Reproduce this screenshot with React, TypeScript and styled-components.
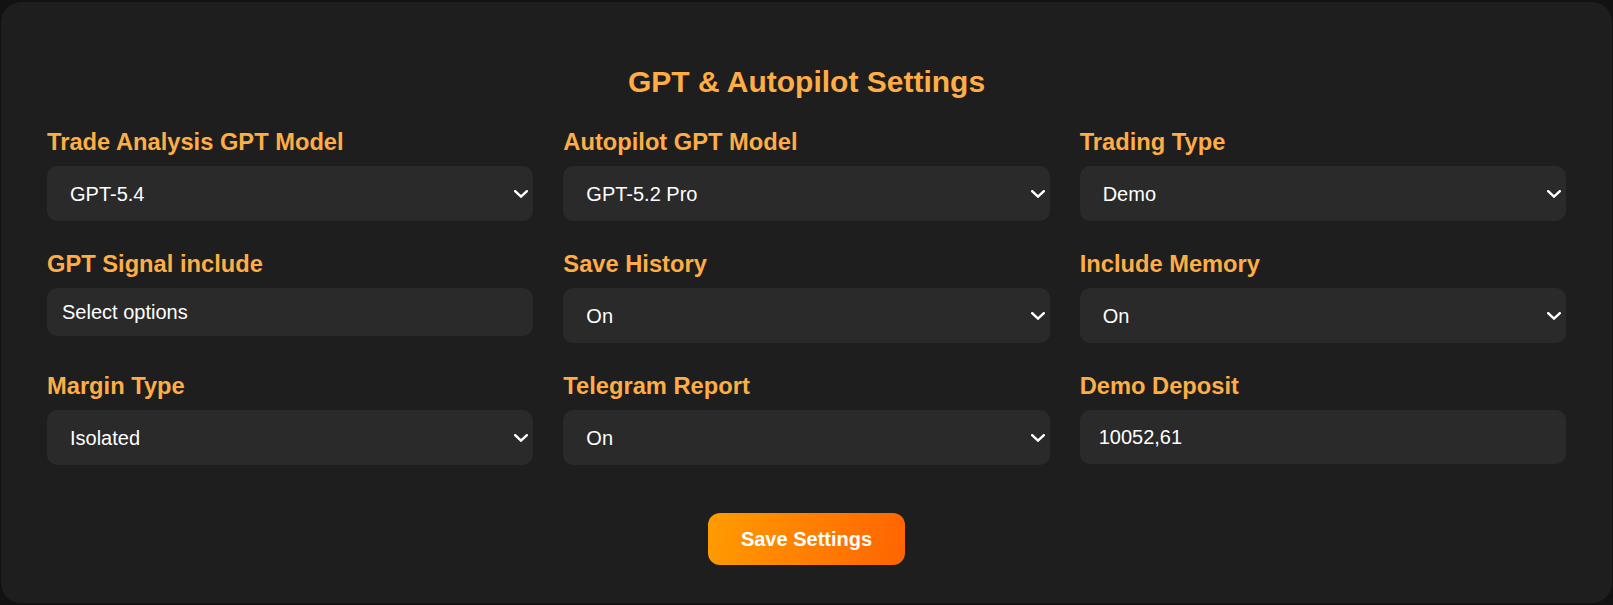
import React, { useState } from "react";
import styled, { createGlobalStyle } from "styled-components";

const GlobalStyle = createGlobalStyle`
  * {
    box-sizing: border-box;
  }

  body {
    margin: 0;
    padding: 2px 1px 2px 1px;
    background: #121212;
    font-family: "Liberation Sans", Arial, sans-serif;
  }
`;

const Card = styled.section`
  background: #1e1e1e;
  border-radius: 20px;
  padding: 62px 46px 38px;
  display: flex;
  flex-direction: column;
  align-items: center;
`;

const Titulo = styled.h2`
  margin: 0 0 30px;
  font-size: 30px;
  line-height: 35px;
  font-weight: 700;
  color: #ffad45;
`;

const Grade = styled.div`
  width: 100%;
  display: grid;
  grid-template-columns: repeat(3, 1fr);
  column-gap: 30px;
  row-gap: 30px;
  align-items: start;
`;

const Campo = styled.div`
  display: flex;
  flex-direction: column;
`;

const Rotulo = styled.label`
  font-size: 23.7px;
  line-height: 27px;
  font-weight: 700;
  color: #ffad45;
  margin-bottom: 10px;
`;

const CaixaSelect = styled.div`
  position: relative;
`;

const Select = styled.select`
  appearance: none;
  width: 100%;
  height: 55px;
  padding: 0 40px 0 23px;
  border: none;
  border-radius: 10px;
  background: #2a2a2a;
  color: #ffffff;
  font-family: inherit;
  font-size: 20px;
  outline: none;
`;

const Seta = styled.svg`
  position: absolute;
  right: 5px;
  top: 50%;
  margin-top: -4px;
  pointer-events: none;
`;

const Entrada = styled.input`
  width: 100%;
  height: 54px;
  padding: 0 19px;
  border: none;
  border-radius: 10px;
  background: #2a2a2a;
  color: #ffffff;
  font-family: inherit;
  font-size: 20px;
  outline: none;
`;

const MultiSelect = styled.div`
  height: 48px;
  padding: 0 15px;
  display: flex;
  align-items: center;
  border-radius: 10px;
  background: #2a2a2a;
  color: #ffffff;
  font-size: 20px;
  cursor: pointer;
`;

const BotaoSalvar = styled.button`
  margin-top: 48px;
  height: 52px;
  padding: 0 33px;
  border: none;
  border-radius: 12px;
  background: linear-gradient(100deg, #ff9c00, #ff6400);
  color: #ffffff;
  font-family: inherit;
  font-size: 20px;
  font-weight: 700;
  cursor: pointer;
`;

interface PropsSelecao {
  label: string;
  valor: string;
  opcoes: string[];
  onChange: (valor: string) => void;
}

function CampoSelecao({ label, valor, opcoes, onChange }: PropsSelecao) {
  return (
    <Campo>
      <Rotulo>{label}</Rotulo>
      <CaixaSelect>
        <Select value={valor} onChange={(e) => onChange(e.target.value)}>
          {opcoes.map((opcao) => (
            <option key={opcao} value={opcao}>
              {opcao}
            </option>
          ))}
        </Select>
        <Seta width="14" height="8" viewBox="0 0 14 8" fill="none">
          <path
            d="M1.2 1.2 7 6.6l5.8-5.4"
            stroke="#ffffff"
            strokeWidth="2.4"
            strokeLinecap="square"
          />
        </Seta>
      </CaixaSelect>
    </Campo>
  );
}

export default function App() {
  const [modeloAnalise, setModeloAnalise] = useState("GPT-5.4");
  const [modeloAutopilot, setModeloAutopilot] = useState("GPT-5.2 Pro");
  const [tipoTrading, setTipoTrading] = useState("Demo");
  const [historico, setHistorico] = useState("On");
  const [memoria, setMemoria] = useState("On");
  const [margem, setMargem] = useState("Isolated");
  const [telegram, setTelegram] = useState("On");
  const [deposito, setDeposito] = useState("10052,61");

  const modelos = ["GPT-5.4", "GPT-5.2 Pro", "GPT-5.2", "GPT-5 Mini"];
  const onOff = ["On", "Off"];

  return (
    <>
      <GlobalStyle />
      <Card>
        <Titulo>GPT &amp; Autopilot Settings</Titulo>
        <Grade>
          <CampoSelecao
            label="Trade Analysis GPT Model"
            valor={modeloAnalise}
            opcoes={modelos}
            onChange={setModeloAnalise}
          />
          <CampoSelecao
            label="Autopilot GPT Model"
            valor={modeloAutopilot}
            opcoes={modelos}
            onChange={setModeloAutopilot}
          />
          <CampoSelecao
            label="Trading Type"
            valor={tipoTrading}
            opcoes={["Demo", "Real"]}
            onChange={setTipoTrading}
          />
          <Campo>
            <Rotulo>GPT Signal include</Rotulo>
            <MultiSelect>Select options</MultiSelect>
          </Campo>
          <CampoSelecao
            label="Save History"
            valor={historico}
            opcoes={onOff}
            onChange={setHistorico}
          />
          <CampoSelecao
            label="Include Memory"
            valor={memoria}
            opcoes={onOff}
            onChange={setMemoria}
          />
          <CampoSelecao
            label="Margin Type"
            valor={margem}
            opcoes={["Isolated", "Cross"]}
            onChange={setMargem}
          />
          <CampoSelecao
            label="Telegram Report"
            valor={telegram}
            opcoes={onOff}
            onChange={setTelegram}
          />
          <Campo>
            <Rotulo>Demo Deposit</Rotulo>
            <Entrada
              type="text"
              value={deposito}
              onChange={(e) => setDeposito(e.target.value)}
            />
          </Campo>
        </Grade>
        <BotaoSalvar type="button">Save Settings</BotaoSalvar>
      </Card>
    </>
  );
}
